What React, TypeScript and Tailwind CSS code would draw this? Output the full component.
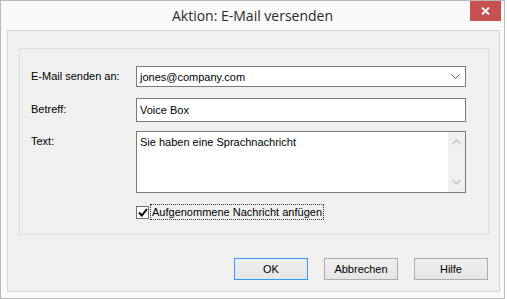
import React from "react";

const ui = { fontFamily: '"Liberation Sans", Arial, sans-serif' };

export default function App() {
  return (
    <div className="w-[507px] h-[299px] bg-white">
      <div className="relative w-[505px] h-[299px] border border-[#b9b9b9] bg-[#fafafa] flex flex-col">
        {/* title bar */}
        <div className="h-[29px] flex items-center justify-center">
          <span
            className="text-[14px] text-[#2b2b2b] leading-none pt-[1px]"
            style={{ fontFamily: '"Segoe UI", "Open Sans", "Noto Sans", sans-serif' }}
          >
            Aktion: E-Mail versenden
          </span>
        </div>
        <div className="absolute top-0 right-[3px] w-[31px] h-[20px] bg-[#c75050] flex items-center justify-center">
          <svg width="9" height="8" viewBox="0 0 9 8">
            <path d="M1 0.5 L8 7.5 M8 0.5 L1 7.5" stroke="white" strokeWidth="1.8" />
          </svg>
        </div>

        {/* client area */}
        <div
          className="ml-[6px] w-[493px] h-[262px] border border-[#d5d5d5] bg-[#f0f0f0] flex flex-col text-[11px] text-black"
          style={ui}
        >
          {/* group box */}
          <div className="ml-[11px] mt-[17px] w-[470px] h-[187px] border border-[#dcdcdc] flex flex-col pl-[11px] pt-[17px]">
            {/* row 1 */}
            <div className="flex items-start">
              <div className="w-[105px] pt-[3px] leading-[14px]">E-Mail senden an:</div>
              <div className="w-[330px] h-[21px] border border-[#7a7a7a] bg-white flex items-center pl-[3px] pr-[5px]">
                <span className="flex-1 leading-[14px]">jones@company.com</span>
                <svg width="9" height="6" viewBox="0 0 9 6">
                  <path d="M0.5 0.5 L4.5 4.5 L8.5 0.5" fill="none" stroke="#555" strokeWidth="1" />
                </svg>
              </div>
            </div>
            {/* row 2 */}
            <div className="flex items-start mt-[11px]">
              <div className="w-[105px] pt-[4px] leading-[14px]">Betreff:</div>
              <div className="w-[330px] h-[24px] border border-[#7a7a7a] bg-white flex items-center pl-[3px]">
                <span className="leading-[14px]">Voice Box</span>
              </div>
            </div>
            {/* row 3 */}
            <div className="flex items-start mt-[9px]">
              <div className="w-[105px] pt-[3px] leading-[14px]">Text:</div>
              <div className="w-[330px] h-[62px] border border-[#7a7a7a] bg-white flex">
                <div className="flex-1 pl-[3px] pt-[3px] leading-[14px]">Sie haben eine Sprachnachricht</div>
                <div className="w-[17px] bg-[#f0f0f0] flex flex-col items-center justify-between py-[7px]">
                  <svg width="9" height="6" viewBox="0 0 9 6">
                    <path d="M0.5 5 L4.5 1 L8.5 5" fill="none" stroke="#c2c2c2" strokeWidth="1.5" />
                  </svg>
                  <svg width="9" height="6" viewBox="0 0 9 6">
                    <path d="M0.5 1 L4.5 5 L8.5 1" fill="none" stroke="#c2c2c2" strokeWidth="1.5" />
                  </svg>
                </div>
              </div>
            </div>
            {/* checkbox */}
            <div className="flex items-center mt-[11px] ml-[105px]">
              <div className="w-[13px] h-[13px] border border-[#707070] bg-white flex items-center justify-center">
                <svg width="10" height="9" viewBox="0 0 10 9">
                  <path d="M1 4.5 L3.8 7.5 L9 1" fill="none" stroke="#000" strokeWidth="2" />
                </svg>
              </div>
              <div className="ml-[1px] h-[16px] px-[1px] border border-dotted border-[#333] flex items-center leading-[14px]">
                Aufgenommene Nachricht anfügen
              </div>
            </div>
          </div>

          {/* buttons */}
          <div className="flex justify-end gap-[16px] mt-[23px] pr-[11px]">
            <button className="w-[74px] h-[22px] border border-[#3399ff] bg-gradient-to-b from-[#f0f0f0] to-[#e5e5e5] leading-none">
              OK
            </button>
            <button className="w-[74px] h-[22px] border border-[#adadad] bg-gradient-to-b from-[#f0f0f0] to-[#e5e5e5] leading-none">
              Abbrechen
            </button>
            <button className="w-[74px] h-[22px] border border-[#adadad] bg-gradient-to-b from-[#f0f0f0] to-[#e5e5e5] leading-none">
              Hilfe
            </button>
          </div>
        </div>
      </div>
    </div>
  );
}
